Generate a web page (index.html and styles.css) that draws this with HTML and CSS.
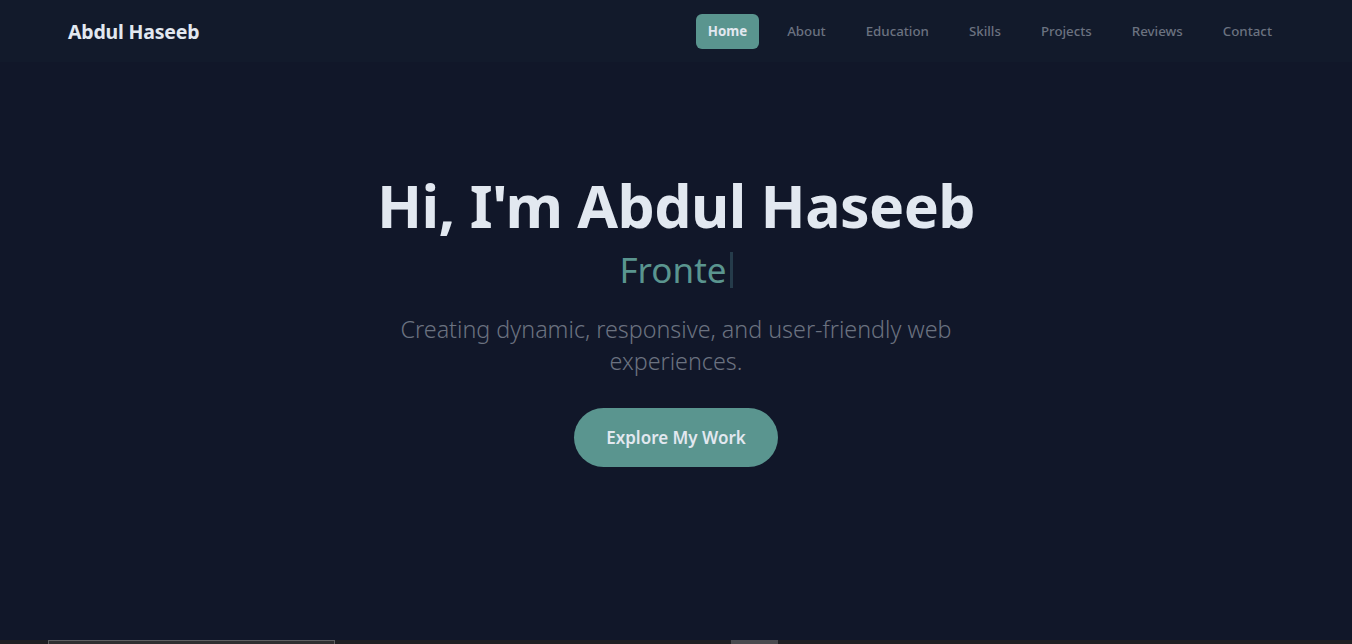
FILE: index.html
```html
<!DOCTYPE html>
<html lang="en">
<head>
<meta charset="utf-8">
<title>Abdul Haseeb</title>
<link rel="stylesheet" href="styles.css">
</head>
<body>
<header class="site-header">
  <div class="container nav-bar">
    <a class="logo" href="#">Abdul Haseeb</a>
    <nav class="nav">
      <a class="nav-link active" href="#">Home</a>
      <a class="nav-link" href="#">About</a>
      <a class="nav-link" href="#">Education</a>
      <a class="nav-link" href="#">Skills</a>
      <a class="nav-link" href="#">Projects</a>
      <a class="nav-link" href="#">Reviews</a>
      <a class="nav-link" href="#">Contact</a>
    </nav>
  </div>
</header>
<main>
  <section class="hero">
    <div class="hero-inner">
      <h1 class="hero-title">Hi, I'm Abdul Haseeb</h1>
      <div class="hero-role"><span class="typed">Fronte</span><span class="cursor"></span></div>
      <p class="hero-text">Creating dynamic, responsive, and user-friendly web experiences.</p>
      <a class="hero-btn" href="#">Explore My Work</a>
    </div>
  </section>
  <section class="next">
    <div class="next-box"></div>
    <div class="next-tab"></div>
  </section>
</main>
</body>
</html>
```
FILE: styles.css
```css
* { box-sizing: border-box; }
html, body { margin: 0; padding: 0; }
body {
  background: #111729;
  font-family: "Noto Sans", "Open Sans", sans-serif;
  color: #e2e8f0;
  overflow: hidden;
}
a { text-decoration: none; }
.site-header {
  position: fixed;
  top: 0; left: 0; right: 0;
  height: 62px;
  background: #121a2b;
  z-index: 10;
}
.container {
  max-width: 1216px;
  margin: 0 auto;
}
.nav-bar {
  height: 62px;
  display: flex;
  align-items: center;
  justify-content: space-between;
}
.logo {
  color: #e2e8f0;
  font-size: 19.5px;
  font-weight: 700;
  letter-spacing: -0.2px;
}
.nav { display: flex; gap: 16px; align-items: center; }
.nav-link {
  color: #6b7280;
  font-size: 13.3px;
  font-weight: 500;
  padding: 8px 12px;
  line-height: 19px;
  border-radius: 6px;
}
.nav-link.active {
  background: #5a958f;
  color: #e2e8f0;
  font-weight: 700;
}
.hero {
  height: 640px;
  display: flex;
  justify-content: center;
  text-align: center;
}
.hero-inner {
  display: flex;
  flex-direction: column;
  align-items: center;
  padding-top: 175px;
}
.hero-title {
  margin: 0;
  font-size: 59px;
  line-height: 60px;
  font-weight: 700;
  color: #e2e8f0;
  letter-spacing: -0.55px;
}
.hero-role {
  margin-top: 15px;
  height: 40px;
  display: flex;
  align-items: center;
  font-size: 35px;
  color: #5a958f;
}
.typed { line-height: 40px; }
.cursor {
  width: 3px;
  height: 36px;
  background: #253b4a;
  margin-left: 3px;
}
.hero-text {
  margin: 23px 0 0;
  max-width: 576px;
  font-size: 23.3px;
  line-height: 32px;
  font-weight: 300;
  color: #6b7280;
}
.hero-btn {
  margin-top: 31px;
  background: #5a958f;
  color: #e2e8f0;
  font-size: 17px;
  font-weight: 600;
  line-height: 27px;
  padding: 16px 32px;
  border-radius: 9999px;
}
.next {
  height: 4px;
  background: #1f1f23;
  display: flex;
  align-items: flex-start;
}
.next-box {
  margin-left: 48px;
  width: 287px;
  height: 4px;
  background: #2f2f31;
  border: 1px solid #606062;
  border-bottom: none;
}
.next-tab {
  margin-left: 396px;
  width: 47px;
  height: 4px;
  background: #4a4a4f;
}
```
